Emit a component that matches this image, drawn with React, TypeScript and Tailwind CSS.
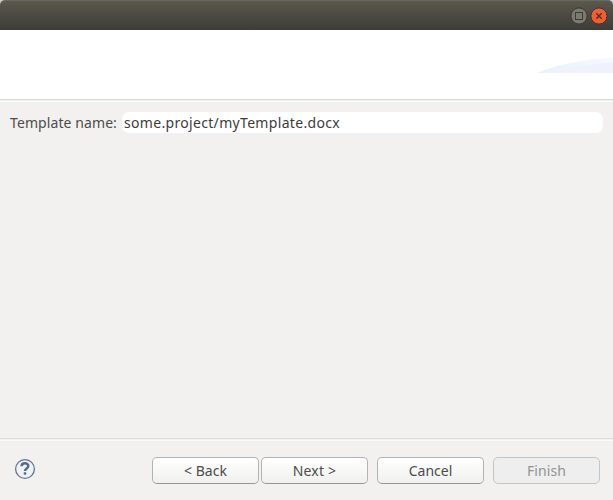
import React from "react";

type ButtonProps = {
  label: string;
  className?: string;
  textClassName?: string;
  disabled?: boolean;
};

function DialogButton({ label, className = "", textClassName = "", disabled = false }: ButtonProps) {
  const look = disabled
    ? "border-[#c5c5c5] bg-[#eeeeee] text-[#949390]"
    : "border-[#b4b3b1] border-b-[#979695] bg-linear-to-b from-white to-[#f0f0ef] text-[#4c4c4c]";
  return (
    <button
      disabled={disabled}
      className={`flex h-[27px] w-[107px] items-center justify-center rounded-[5px] border ${look} ${className}`}
    >
      <span className={`whitespace-nowrap ${textClassName}`}>{label}</span>
    </button>
  );
}

function TitleBar() {
  return (
    <div className="bg-[#cfcfcf]">
      <header className="flex h-[30px] items-center justify-end gap-[2px] rounded-t-[5px] border-t border-[#6b6860] bg-linear-to-b from-[#5b584d] to-[#3d3c38] pr-[5px]">
        <svg width="18" height="18" viewBox="0 0 18 18" aria-label="Maximize">
          <circle cx="9" cy="9" r="8.1" fill="#7b7972" stroke="#393832" />
          <rect x="5.5" y="5.5" width="7" height="7" fill="none" stroke="#3c3b37" />
        </svg>
        <svg width="18" height="18" viewBox="0 0 18 18" aria-label="Close">
          <circle cx="9" cy="9" r="8.1" fill="#ee6034" stroke="#393832" />
          <path d="M6.3 6.3 11.7 11.7M11.7 6.3 6.3 11.7" stroke="#5a2c1a" strokeWidth="1.4" />
        </svg>
      </header>
    </div>
  );
}

function Banner() {
  return (
    <div className="flex h-[69px] justify-end bg-white pt-[26px]">
      <svg width="78" height="17" viewBox="0 0 78 17">
        <defs>
          <linearGradient id="swoosh" x1="0" x2="1">
            <stop offset="0" stopColor="#eaf1fb" />
            <stop offset="1" stopColor="#f6f9fe" />
          </linearGradient>
        </defs>
        <path d="M2 17C20 9 46 4 78 1.5V17Z" fill="url(#swoosh)" />
        <path d="M22 17C38 11 58 7.5 78 6.5V17Z" fill="#edf1fb" opacity=".85" />
      </svg>
    </div>
  );
}

export default function App() {
  return (
    <div className="flex h-[500px] w-[613px] flex-col overflow-hidden bg-[#f2f1f0] font-['Noto_Sans','Open_Sans',sans-serif] text-[14px] text-[#4c4c4c]">
      <TitleBar />
      <Banner />
      <div className="h-[3px] border-t border-b border-t-[#d8d8d7] border-b-[#fbfbfb]" />
      <main className="flex flex-1 items-start pt-2.5 pr-2.5 pl-2.5">
        <label htmlFor="template" className="w-28 whitespace-nowrap leading-[21px] tracking-[0.09px]">
          Template name:
        </label>
        <input
          id="template"
          defaultValue="some.project/myTemplate.docx"
          className="h-[21px] min-w-0 flex-1 rounded-[7px] bg-white px-0.5 tracking-[0.32px] text-[#3c3c3c] outline-none"
        />
      </main>
      <footer className="flex h-[62px] flex-col">
        <div className="h-[3px] border-t border-b border-t-[#dcdcdb] border-b-[#fbfbfb]" />
        <div className="flex flex-1 items-start pt-4 pr-[13px] pl-3.5">
          <svg className="mt-[1px]" width="22" height="22" viewBox="0 0 22 22" aria-label="Help">
            <circle cx="11" cy="11" r="9.4" fill="#f1f2f3" stroke="#5f7594" strokeWidth="1.3" />
            <path d="M7.6 8.3C7.6 4.2 14.3 4.3 14.3 8C14.3 10.5 11 10.4 11 13" fill="none" stroke="#536b8e" strokeWidth="2.5" />
            <rect x="9.7" y="14.2" width="2.6" height="2.6" rx=".8" fill="#536b8e" />
          </svg>
          <div className="ml-auto flex">
            <DialogButton label="< Back" />
            <DialogButton label="Next >" className="ml-0.5" textClassName="tracking-[0.2px]" />
            <DialogButton label="Cancel" className="ml-[9px]" />
            <DialogButton label="Finish" className="ml-[9px]" textClassName="tracking-[0.1px]" disabled />
          </div>
        </div>
      </footer>
    </div>
  );
}
